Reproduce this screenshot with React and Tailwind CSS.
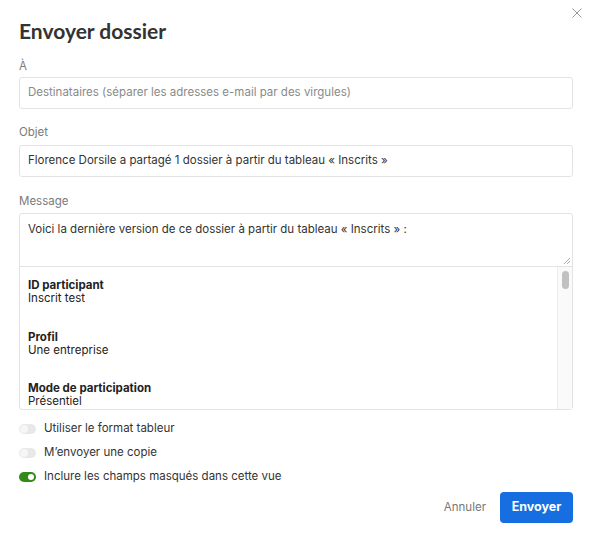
import React from "react";

function Toggle({ on }) {
  return on ? (
    <span className="relative inline-block w-[17px] h-[10px] rounded-full bg-[#338a17]">
      <span className="absolute right-[2px] top-[2px] w-[6px] h-[6px] rounded-full bg-white" />
    </span>
  ) : (
    <span className="relative inline-block w-[17px] h-[10px] rounded-full bg-[#e8e8e8]">
      <span className="absolute left-[1px] top-[1px] w-[8px] h-[8px] rounded-full bg-[#f6f6f6]" />
    </span>
  );
}

export default function App() {
  return (
    <div className="w-[592px] h-[539px] bg-white relative text-[#333333] font-['Inter',sans-serif] text-[11.5px]">
      <button className="absolute right-[9px] top-[7px] w-[12px] h-[12px] flex items-center justify-center">
        <svg width="10" height="10" viewBox="0 0 10 10" fill="none" stroke="#9a9a9a" strokeWidth="1">
          <path d="M0.5 0.5 L9.5 9.5 M9.5 0.5 L0.5 9.5" />
        </svg>
      </button>
      <div className="px-[19px] pt-[18px] flex flex-col">
        <h1 className="font-['Lato',sans-serif] font-bold text-[21px] leading-[26px] text-[#333333]">Envoyer dossier</h1>

        <label className="mt-[14px] text-[#7a7a7a] leading-[16px]">À</label>
        <div className="mt-[3px] h-[32px] border border-[#e3e3e3] rounded-[3px] flex items-center px-[8px] text-[#8a8a8a]">
          Destinataires (séparer les adresses e-mail par des virgules)
        </div>

        <label className="mt-[15px] text-[#7a7a7a] leading-[16px]">Objet</label>
        <div className="mt-[5px] h-[32px] border border-[#e3e3e3] rounded-[3px] flex items-center px-[8px] text-[#333333]">
          Florence Dorsile a partagé 1 dossier à partir du tableau « Inscrits »
        </div>

        <label className="mt-[16px] text-[#7a7a7a] leading-[16px]">Message</label>
        <div className="mt-[4px] border border-[#e3e3e3] rounded-[3px]">
          <div className="relative h-[53px] px-[8px] pt-[7px] leading-[16px] text-[#333333] border-b border-[#e3e3e3]">
            Voici la dernière version de ce dossier à partir du tableau « Inscrits » :
            <svg className="absolute right-[1px] bottom-[1px]" width="8" height="8" viewBox="0 0 8 8" stroke="#9a9a9a" strokeWidth="0.8">
              <path d="M1 7 L7 1 M4 7 L7 4" />
            </svg>
          </div>
          <div className="flex h-[142px]">
            <div className="flex-1 px-[8px] pt-[12px] flex flex-col gap-[25.5px] leading-[13px] overflow-hidden">
              <div>
                <div className="font-bold text-[#222222]">ID participant</div>
                <div className="text-[#222222]">Inscrit test</div>
              </div>
              <div>
                <div className="font-bold text-[#222222]">Profil</div>
                <div className="text-[#222222]">Une entreprise</div>
              </div>
              <div>
                <div className="font-bold text-[#222222]">Mode de participation</div>
                <div className="text-[#222222]">Présentiel</div>
              </div>
            </div>
            <div className="w-[15px] border-l border-[#ececec] bg-[#fafafa] pt-[4px] flex justify-center">
              <div className="w-[7px] h-[18px] rounded-full bg-[#c1c1c1]" />
            </div>
          </div>
        </div>

        <div className="mt-[11px] flex flex-col gap-[8px]">
          <div className="flex items-center gap-[8px] h-[16px]">
            <Toggle on={false} />
            <span>Utiliser le format tableur</span>
          </div>
          <div className="flex items-center gap-[8px] h-[16px]">
            <Toggle on={false} />
            <span>M’envoyer une copie</span>
          </div>
          <div className="flex items-center gap-[8px] h-[16px]">
            <Toggle on={true} />
            <span>Inclure les champs masqués dans cette vue</span>
          </div>
        </div>

        <div className="mt-[7px] flex justify-end items-center gap-[14px]">
          <button className="text-[#777777] px-[0px]">Annuler</button>
          <button className="h-[31px] w-[73px] rounded-[4px] bg-[#166ee1] text-white font-bold text-[12.5px]">Envoyer</button>
        </div>
      </div>
    </div>
  );
}
